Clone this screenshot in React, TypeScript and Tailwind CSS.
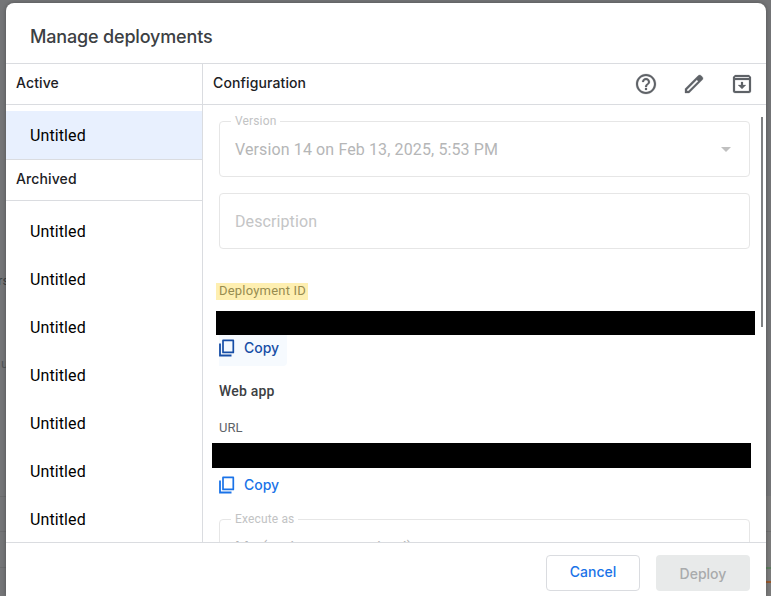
import type { ReactNode } from "react";

const G = "font-['Inter','Liberation_Sans',sans-serif] font-medium";

function CopyButton({ hovered = false }: { hovered?: boolean }) {
  return (
    <div
      className={
        hovered
          ? "flex h-[31px] w-[68px] items-center rounded-br-[4px] bg-[#f6fafe] pb-[5px] text-[#174ea6]"
          : "flex h-[35px] w-[68px] items-center pb-[2px] text-[#1a73e8]"
      }
    >
      <svg width="16" height="18" viewBox="0 0 16 18" fill="none" stroke="currentColor">
        <path d="M4 1.400h10.300v12H4z" strokeWidth="1.700" strokeLinejoin="round" />
        <path d="M1 4.500v12H12.500" strokeWidth="1.800" />
      </svg>
      <span className={`${G} ml-[9px] text-[14px] leading-5`}>Copy</span>
    </div>
  );
}

function Field({ label, children, className = "" }: { label?: string; children: ReactNode; className?: string }) {
  return (
    <fieldset className={`rounded-[4px] border border-[#e6e6e6] ${className}`}>
      {label && (
        <legend className="ml-[11px] h-0 px-1 text-[12px] leading-[0px] tracking-[0.15px] text-[#c2c3c4]">
          <span className="relative -top-px">{label}</span>
        </legend>
      )}
      {children}
    </fieldset>
  );
}

function Section({ title }: { title: string }) {
  return (
    <div className={`${G} flex h-[41px] items-center border-b border-[#dadce0] px-2.5 pb-[3px] text-[14px] tracking-[0.12px] text-[#202124]`}>
      {title}
    </div>
  );
}

function DeploymentItem({ selected = false }: { selected?: boolean }) {
  return (
    <div className={`flex h-12 items-center px-6 pt-0.5 text-[16px] tracking-[0.1px] text-black ${selected ? "bg-[#e8f0fe]" : ""}`}>
      Untitled
    </div>
  );
}

export default function App() {
  return (
    <div className="relative h-[596px] w-[771px] overflow-hidden bg-[#747577] pt-[3px] pr-[5px] pl-[6px] font-[Roboto,sans-serif]">
      <span className="absolute top-[271px] left-[-2px] text-[13px] text-[#3c4043]">rs</span>
      <span className="absolute top-[354px] left-[1px] text-[13px] text-[#505357]">u</span>
      <div className="absolute top-[496px] left-0 h-px w-[6px] bg-[#6b6c6e]" />
      <div className="absolute top-[531px] left-0 h-px w-[6px] bg-[#6b6c6e]" />
      <div className="absolute top-[567px] left-0 h-px w-[6px] bg-[#6b6c6e]" />
      <div className="absolute top-[496px] right-0 bottom-0 w-[5px] bg-[#7b7b7b]" />
      <div className="absolute top-[531px] right-0 h-px w-[5px] bg-[#6f6f70]" />
      <div className="absolute top-[567px] right-0 h-[2px] w-[5px] bg-[#5d7d5f]" />
      <div className="absolute top-[581px] right-0 h-[2px] w-[5px] bg-[#96592f]" />
      <div className="relative flex h-[593px] flex-col rounded-t-[8px] bg-white shadow-[0_0_4px_rgba(0,0,0,0.3)]">
        <header className="flex h-[61px] shrink-0 items-center border-b border-[#dadce0] px-6 pt-[7px]">
          <h1 className={`${G} text-[18px] tracking-[-0.17px] text-[#3c4043]`}>Manage deployments</h1>
        </header>
        <div className="flex h-[478px] shrink-0 overflow-hidden">
          <nav className="w-[197px] shrink-0 border-r border-[#dadce0]">
            <Section title="Active" />
            <div className="border-b border-[#dadce0] pt-1.5">
              <DeploymentItem selected />
            </div>
            <Section title="Archived" />
            <div className="pt-1.5">
              {[1, 2, 3, 4, 5, 6, 7].map((n) => (
                <DeploymentItem key={n} />
              ))}
            </div>
          </nav>
          <main className="flex-1">
            <div className="flex h-[41px] items-center border-b border-[#dadce0] pr-3 pl-2.5">
              <h2 className={`${G} flex-1 pb-[3px] text-[14px] tracking-[0.12px] text-[#202124]`}>Configuration</h2>
              <div className="flex gap-6 text-[#5f6368]">
                <svg width="24" height="24" viewBox="0 0 24 24" fill="currentColor" stroke="currentColor" strokeWidth="0.2">
                  <path d="M11 18h2v-2h-2v2zm1-16C6.48 2 2 6.48 2 12s4.48 10 10 10 10-4.48 10-10S17.520 2 12 2zm0 18c-4.410 0-8-3.590-8-8s3.590-8 8-8 8 3.590 8 8-3.590 8-8 8zm0-14c-2.210 0-4 1.790-4 4h2c0-1.100.9-2 2-2s2 .9 2 2c0 2-3 1.750-3 5h2c0-2.250 3-2.500 3-5 0-2.210-1.790-4-4-4z" />
                </svg>
                <svg width="24" height="24" viewBox="0 0 24 24" fill="currentColor" stroke="currentColor" strokeWidth="0.3">
                  <path d="M20.410 4.940l-1.350-1.350c-.78-.78-2.050-.78-2.830 0L3 16.820V21h4.180L20.410 7.770c.79-.78.79-2.050 0-2.830zM6.410 19.060L5 19v-1.360l9.820-9.820 1.410 1.410-9.820 9.830z" />
                </svg>
                <svg width="24" height="24" viewBox="0 0 24 24" fill="currentColor" stroke="currentColor" strokeWidth="0.2">
                  <path d="M19 3H5L3 5v14c0 1.100.9 2 2 2h14c1.100 0 2-.9 2-2V5l-2-2zm0 16H5V8h14v11zM5 6V5h14v1H5zm11 7h-3v-3h-2v3H8l4 4 4-4z" />
                </svg>
              </div>
            </div>
            <div className="relative h-[437px] overflow-hidden pt-4 pl-4">
              <Field label="Version" className="h-[56px] w-[531px]">
                <div className="flex h-[55px] items-center pr-[18px] pl-[15px] text-[16px] text-[#b5b6b7]">
                  <span className="flex-1 tracking-[0.12px]">Version 14 on Feb 13, 2025, 5:53 PM</span>
                  <svg width="10" height="5" viewBox="0 0 10 5" fill="#c0c0c0"><path d="M0 0h10L5 5z" /></svg>
                </div>
              </Field>
              <Field className="mt-4 flex h-[56px] w-[531px] items-center pl-[15px]">
                <span className="pt-px text-[16px] tracking-[0.1px] text-[#c4c5c6]">Description</span>
              </Field>
              <div className="mt-[34px] -ml-[3px] h-[17px] w-[92px] bg-[#feefb1] pl-[3px] text-[13px] leading-[16px] tracking-[0.2px] text-[#978c50]">Deployment ID</div>
              <div className="mt-[11px] -ml-[3px] h-6 w-[539px] bg-black" />
              <CopyButton hovered />
              <div className="mt-[15px] h-[20px] text-[14px] leading-5 font-medium tracking-[0.2px] text-[#3c4043]">Web app</div>
              <div className="mt-[18px] h-[18px] text-[13px] leading-[18px] text-[#5f6368]">URL</div>
              <div className="mt-[6px] -ml-[7px] h-[25px] w-[539px] bg-black" />
              <CopyButton />
              <Field label="Execute as" className="mt-[16px] h-[57px] w-[531px]">
                <div className="pt-[16px] pl-[15px] text-[16px] leading-6 tracking-[0.12px] text-[#b5b6b7]">Me (maint.community.d)</div>
              </Field>
              <div className="absolute top-3 right-[3px] h-[210px] w-[2px] bg-[#7f8183]" />
            </div>
          </main>
        </div>
        <footer className="flex flex-1 justify-end gap-4 border-t border-[#dadce0] pt-3 pr-4">
          <button className={`${G} h-9 w-[94px] rounded-[4px] border border-[#dadce0] pb-[3px] text-[14px] text-[#1a73e8]`}>Cancel</button>
          <button className={`${G} h-9 w-[94px] rounded-[4px] bg-[#e8eaea] text-[14px] text-[#a9abac]`}>Deploy</button>
        </footer>
      </div>
    </div>
  );
}
